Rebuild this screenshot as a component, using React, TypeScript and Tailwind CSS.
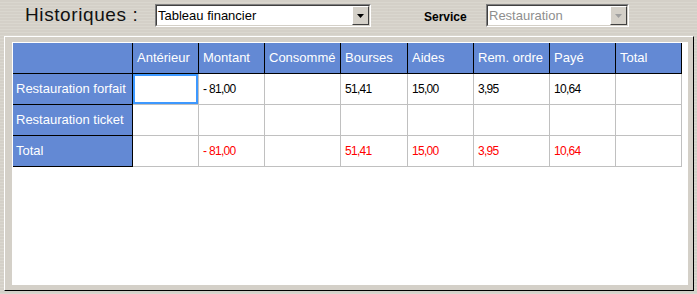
import React from "react";

const cols = [
  { w: "w-[120px]", label: "" },
  { w: "w-[66px]", label: "Antérieur" },
  { w: "w-[66px]", label: "Montant" },
  { w: "w-[76px]", label: "Consommé" },
  { w: "w-[67px]", label: "Bourses" },
  { w: "w-[66px]", label: "Aides" },
  { w: "w-[76px]", label: "Rem. ordre" },
  { w: "w-[66px]", label: "Payé" },
  { w: "w-[66px]", label: "Total" },
];

const rows = [
  { label: "Restauration forfait", values: ["", "- 81,00", "", "51,41", "15,00", "3,95", "10,64", ""], red: false },
  { label: "Restauration ticket", values: ["", "", "", "", "", "", "", ""], red: false },
  { label: "Total", values: ["", "- 81,00", "", "51,41", "15,00", "3,95", "10,64", ""], red: true },
];

const Arrow = ({ color }: { color: string }) => (
  <svg width="7" height="4" viewBox="0 0 7 4">
    <polygon points="0,0 7,0 3.5,4" fill={color} />
  </svg>
);

const Combo = ({ text, width, disabled }: { text: string; width: string; disabled?: boolean }) => (
  <div className={`${width} h-[23px] border border-t-[#808080] border-l-[#808080] border-b-white border-r-white`}>
    <div className="h-full flex border border-t-[#404040] border-l-[#404040] border-b-[#d4d0c8] border-r-[#d4d0c8] bg-white">
      <div
        className={`flex-1 flex items-center pl-[1px] text-[13px] leading-none ${
          disabled ? "text-[#8e8e8e]" : "text-black"
        }`}
      >
        {text}
      </div>
      <div className="w-[17px] h-full flex items-center justify-center bg-[#d4d0c8] border border-t-white border-l-white border-b-[#404040] border-r-[#404040]">
        <Arrow color={disabled ? "#a0a0a0" : "#000000"} />
      </div>
    </div>
  </div>
);

export default function App() {
  return (
    <div
      className="w-[697px] h-[294px] overflow-hidden bg-[repeating-linear-gradient(180deg,#d4d0c8_0px,#d4d0c8_2px,#dad7cf_2px,#dad7cf_3px)]"
      style={{ fontFamily: '"Liberation Sans", Arial, sans-serif' }}
    >
      <div className="h-[36px] flex items-start pt-[4px] pl-[25px]">
        <div className="w-[130px] h-[23px] flex items-center text-[19px] tracking-[0.6px] text-[#111]">
          Historiques :
        </div>
        <Combo text="Tableau financier" width="w-[216px]" />
        <div className="ml-[53px] w-[62px] h-[26px] flex items-center text-[12px] font-bold text-black">
          Service
        </div>
        <Combo text="Restauration" width="w-[143px]" disabled />
      </div>

      <div className="ml-[4px] w-[690px] h-[255px] border border-t-white border-l-white border-b-black border-r-black bg-[#d4d0c8] pt-[5px] pl-[7px] pr-[5px] pb-[5px]">
        <div className="w-full h-full bg-white pt-[1px] pl-[1px]">
          <div className="flex">
            {cols.map((c, i) => (
              <div
                key={i}
                className={`${c.w} h-[31px] shrink-0 flex items-center pl-[4px] bg-[#6389d4] border-r border-b border-black text-white text-[13px]`}
              >
                {c.label}
              </div>
            ))}
          </div>
          {rows.map((r, ri) => (
            <div key={ri} className="flex">
              <div className="w-[120px] h-[31px] shrink-0 flex items-center pl-[3px] bg-[#6389d4] border-r border-b border-black text-white text-[13px] whitespace-nowrap">
                {r.label}
              </div>
              {r.values.map((v, vi) => (
                <div
                  key={vi}
                  className={`${cols[vi + 1].w} h-[31px] shrink-0 flex items-center pl-[4px] border-r border-b border-[#c0c0c0] text-[12px] tracking-[-0.7px] ${
                    r.red ? "text-[#ff0000]" : "text-black"
                  } ${ri === 0 && vi === 0 ? "shadow-[inset_0_0_0_2px_#3d98ff]" : ""}`}
                >
                  {v}
                </div>
              ))}
            </div>
          ))}
        </div>
      </div>
    </div>
  );
}
